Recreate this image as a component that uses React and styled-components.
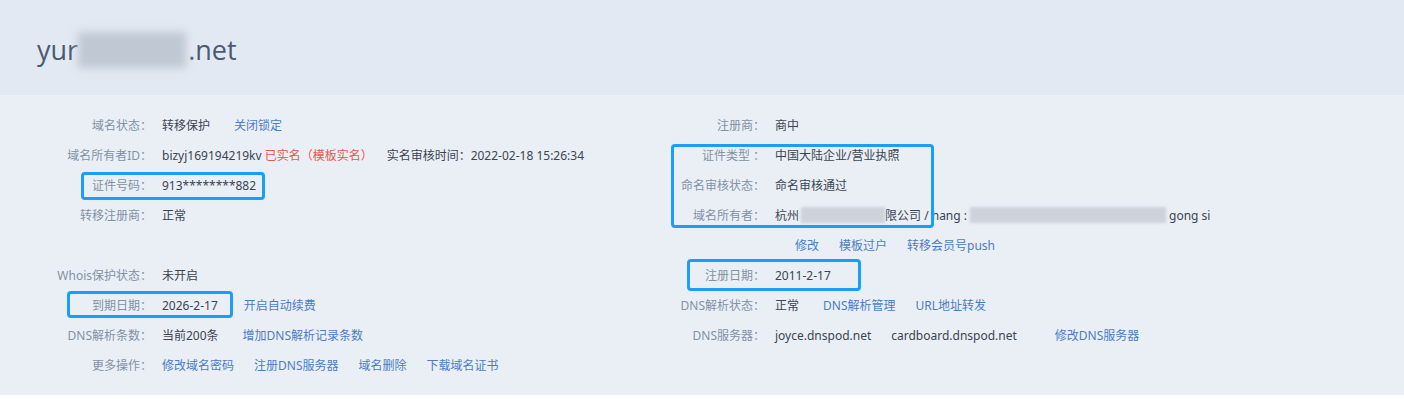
import React from "react";
import styled, { createGlobalStyle } from "styled-components";

const Global = createGlobalStyle`
  html, body { margin: 0; padding: 0; background: #ffffff; }
  body { font-family: "Noto Sans", "Noto Sans CJK SC", sans-serif; }
`;

const Page = styled.div`
  width: 1404px;
`;

const Header = styled.header`
  height: 95px;
  background: #e3e9f3;
  display: flex;
  align-items: center;
  padding: 4px 0 0 37px;
  box-sizing: border-box;
`;

const Title = styled.h1`
  margin: 0;
  font-family: "Open Sans", "Noto Sans", sans-serif;
  font-weight: 400;
  font-size: 27px;
  color: #4a5b72;
  display: flex;
  align-items: center;
`;

const TitleBlur = styled.span`
  display: inline-block;
  width: 108px;
  height: 36px;
  background: #bfc8d3;
  filter: blur(4px);
  margin: 0 2px 0 0;
`;

const Main = styled.main`
  position: relative;
  height: 300px;
  background: #eaeff5;
  padding-top: 15px;
  box-sizing: border-box;
  display: flex;
  font-size: 12px;
`;

const Column = styled.div`
  display: flex;
  flex-direction: column;
  padding-left: ${(p) => p.$pad}px;
  width: ${(p) => p.$width}px;
  box-sizing: border-box;
`;

const Row = styled.div`
  display: flex;
  align-items: center;
  height: 30px;
  white-space: nowrap;
`;

const Label = styled.span`
  width: 120px;
  flex-shrink: 0;
  text-align: right;
  color: #8291a6;
`;

const Values = styled.div`
  display: flex;
  align-items: center;
  margin-left: ${(p) => (p.$indent ? 30 : 10)}px;
  gap: 20px;
`;

const Value = styled.span`
  color: #3a4452;
  margin-right: ${(p) => (p.$after === undefined ? 4 : p.$after)}px;
`;

const Red = styled.span`
  color: #e8564c;
  margin-left: 3px;
  margin-right: -6px;
`;

const Link = styled.a`
  color: #4a7cc6;
  text-decoration: none;
  cursor: pointer;
  margin-left: ${(p) => p.$ml || 0}px;
`;

const Owner = styled.span`
  display: inline-flex;
  align-items: center;
  color: #3a4452;
`;

const Smudge = styled.span`
  display: inline-block;
  width: ${(p) => p.$w}px;
  height: 16px;
  background: #cdd2db;
  filter: blur(1.5px);
  margin: ${(p) => p.$m || "0"};
`;

const Highlight = styled.div`
  position: absolute;
  box-sizing: border-box;
  border: 3px solid #1a9dfd;
  border-radius: 4px;
  left: ${(p) => p.$x}px;
  top: ${(p) => p.$y}px;
  width: ${(p) => p.$w}px;
  height: ${(p) => p.$h}px;
  pointer-events: none;
`;

export default function App() {
  return (
    <Page>
      <Global />
      <Header>
        <Title>
          yur<TitleBlur />.net
        </Title>
      </Header>
      <Main>
        <Column $pad={32} $width={645}>
          <Row>
            <Label>域名状态：</Label>
            <Values>
              <Value>转移保护</Value>
              <Link>关闭锁定</Link>
            </Values>
          </Row>
          <Row>
            <Label>域名所有者ID：</Label>
            <Values>
              <Value $after={0}>
                bizyj169194219kv<Red>已实名（模板实名）</Red>
              </Value>
              <Value>实名审核时间：2022-02-18 15:26:34</Value>
            </Values>
          </Row>
          <Row>
            <Label>证件号码：</Label>
            <Values>
              <Value>913********882</Value>
            </Values>
          </Row>
          <Row>
            <Label>转移注册商：</Label>
            <Values>
              <Value>正常</Value>
            </Values>
          </Row>
          <Row />
          <Row>
            <Label>Whois保护状态：</Label>
            <Values>
              <Value>未开启</Value>
            </Values>
          </Row>
          <Row>
            <Label>到期日期：</Label>
            <Values>
              <Value $after={6}>2026-2-17</Value>
              <Link>开启自动续费</Link>
            </Values>
          </Row>
          <Row>
            <Label>DNS解析条数：</Label>
            <Values>
              <Value>当前200条</Value>
              <Link>增加DNS解析记录条数</Link>
            </Values>
          </Row>
          <Row>
            <Label>更多操作：</Label>
            <Values>
              <Link>修改域名密码</Link>
              <Link>注册DNS服务器</Link>
              <Link>域名删除</Link>
              <Link>下载域名证书</Link>
            </Values>
          </Row>
        </Column>
        <Column $pad={0} $width={759}>
          <Row>
            <Label>注册商：</Label>
            <Values>
              <Value>商中</Value>
            </Values>
          </Row>
          <Row>
            <Label>证件类型 ：</Label>
            <Values>
              <Value>中国大陆企业/营业执照</Value>
            </Values>
          </Row>
          <Row>
            <Label>命名审核状态：</Label>
            <Values>
              <Value>命名审核通过</Value>
            </Values>
          </Row>
          <Row>
            <Label>域名所有者：</Label>
            <Values>
              <Owner>
                杭州
                <Smudge $w={84} $m="0 0 0 2px" />
                限公司 / hang :<Smudge $w={196} $m="0 3px 0 3px" />
                gong si
              </Owner>
            </Values>
          </Row>
          <Row>
            <Label />
            <Values $indent>
              <Link>修改</Link>
              <Link>模板过户</Link>
              <Link>转移会员号push</Link>
            </Values>
          </Row>
          <Row>
            <Label>注册日期：</Label>
            <Values>
              <Value>2011-2-17</Value>
            </Values>
          </Row>
          <Row>
            <Label>DNS解析状态：</Label>
            <Values>
              <Value>正常</Value>
              <Link>DNS解析管理</Link>
              <Link>URL地址转发</Link>
            </Values>
          </Row>
          <Row>
            <Label>DNS服务器：</Label>
            <Values>
              <Value $after={0}>joyce.dnspod.net</Value>
              <Value $after={0}>cardboard.dnspod.net</Value>
              <Link $ml={18}>修改DNS服务器</Link>
            </Values>
          </Row>
        </Column>
        <Highlight $x={81} $y={77} $w={184} $h={28} />
        <Highlight $x={671} $y={49} $w={263} $h={84} />
        <Highlight $x={67} $y={196} $w={166} $h={27} />
        <Highlight $x={687} $y={164} $w={174} $h={32} />
      </Main>
    </Page>
  );
}
